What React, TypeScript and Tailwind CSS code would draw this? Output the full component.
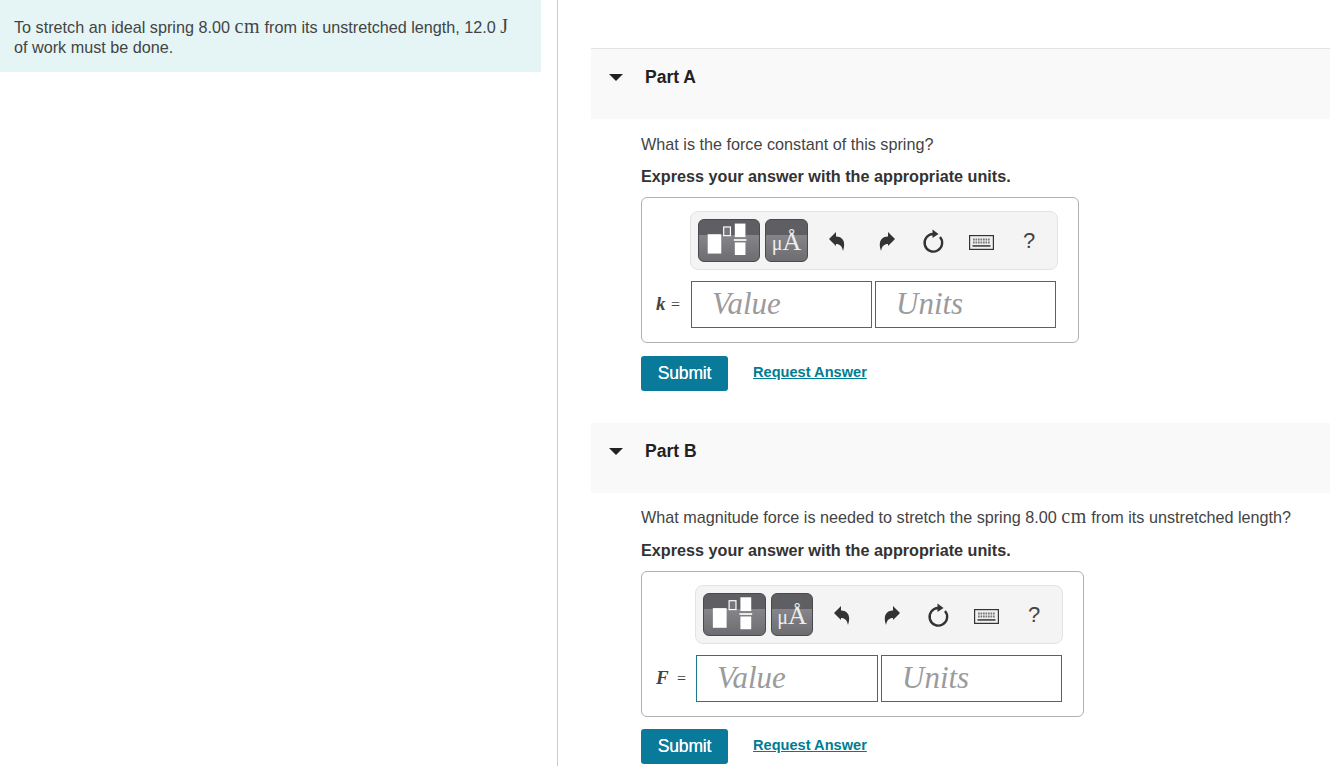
const sans = { fontFamily: '"Liberation Sans", Arial, sans-serif' };

function Cm() {
  return <span className="font-['Liberation_Serif',serif] text-[20px] leading-none tracking-[0.600px]">cm</span>;
}

function TemplateIcon() {
  return (
    <svg width="62" height="43" viewBox="0 0 62 43" className="block">
      <rect x="9" y="15" width="14" height="20" fill="#fff" />
      <rect x="25.500" y="7.500" width="7" height="9" fill="#77777b" stroke="#fff" strokeWidth="1.200" />
      <rect x="37" y="4" width="11" height="14" fill="#fff" />
      <rect x="36" y="20" width="13" height="2" fill="#fff" opacity="0.85" />
      <rect x="37" y="23.500" width="11" height="13" fill="#fff" />
    </svg>
  );
}

function Undo({ flip }: { flip?: boolean }) {
  return (
    <svg width="20" height="22" viewBox="0 0 20 22" className={flip ? "-scale-x-100" : ""}>
      <path d="M1 9 8 2V6.500C14 6.500 18.500 11 15 21C14 16 12 14 8 14V16Z" fill="#333" />
    </svg>
  );
}

function Reset() {
  return (
    <svg width="24" height="26" viewBox="0 0 24 26">
      <path d="M18 9A8.800 8.800 0 1 1 11 6" fill="none" stroke="#333" strokeWidth="2.400" />
      <path d="M10.500 1.500 16.500 6 10.500 10Z" fill="#333" />
    </svg>
  );
}

function Keyboard() {
  const keys: number[] = [4, 6.500, 9, 11.500, 14, 16.500, 19];
  return (
    <svg width="25" height="15" viewBox="0 0 25 15">
      <rect x="0.600" y="0.600" width="23.800" height="13.800" fill="#f0f0f0" stroke="#333" strokeWidth="1.200" />
      {[3.500, 6.500].map((y) =>
        keys.map((x) => <rect key={`${x}-${y}`} x={x} y={y} width="1.700" height="2" fill="#777" />)
      )}
      <rect x="3.500" y="10" width="18" height="1.800" fill="#555" />
    </svg>
  );
}

function Toolbar({ firstWidth, secondWidth }: { firstWidth: number; secondWidth: number }) {
  const tool = "flex h-[43px] items-center justify-center rounded-[6px] border border-[#4a4a4d] bg-[linear-gradient(#5f5f63_0%,#5f5f63_36%,#85858a_36%,#6c6c71_100%)]";
  return (
    <div className="flex h-[59px] w-[368px] items-center rounded-[8px] border border-[#e3e3e3] bg-[#f4f4f4] pl-[7px]">
      <div className={tool} style={{ width: firstWidth }}>
        <TemplateIcon />
      </div>
      <div className={`${tool} ml-[5px]`} style={{ width: secondWidth }}>
        <span className="mt-[3px] font-['Liberation_Serif',serif] leading-none text-[#eeeeee]">
          <span className="text-[20px]">μ</span>
          <span className="text-[26px]">Å</span>
        </span>
      </div>
      <div className="ml-[6px] flex w-[48px] justify-center"><Undo /></div>
      <div className="flex w-[47px] justify-center"><Undo flip /></div>
      <div className="flex w-[50px] justify-center"><Reset /></div>
      <div className="flex w-[44px] justify-center pt-[3px]"><Keyboard /></div>
      <div className="flex w-[52px] justify-center text-[22px] text-[#444]">?</div>
    </div>
  );
}

function AnswerBox({ symbol, symbolWidth, width, inset, firstWidth, secondWidth, valueWidth }: { symbol: string; symbolWidth: number; width: number; inset: number; firstWidth: number; secondWidth: number; valueWidth: number }) {
  const field = "flex h-[47px] items-center border border-[#1b7a8c] bg-white pl-[20px] font-['Liberation_Serif',serif] text-[31px] italic text-[#9b9b9b]";
  return (
    <div className="h-[146px] rounded-[6px] border border-[#b0b0b0] bg-white pt-[13px]" style={{ width }}>
      <div className="flex" style={{ paddingLeft: inset - 2 }}>
        <Toolbar firstWidth={firstWidth} secondWidth={secondWidth} />
      </div>
      <div className="mt-[11px] flex items-center">
        <div className="flex shrink-0 items-center pl-[14px] text-[#444]" style={{ width: inset - 1 }}>
          <span className="font-['Liberation_Serif',serif] text-[19px] font-bold italic" style={{ width: symbolWidth }}>{symbol}</span>
          <span className="font-['Liberation_Serif',serif] text-[16px]">=</span>
        </div>
        <div className={field} style={{ width: valueWidth }}>Value</div>
        <div className={`${field} ml-[3px] w-[181px]`}>Units</div>
      </div>
    </div>
  );
}

function Actions({ top }: { top: number }) {
  return (
    <div className="flex items-center" style={{ marginTop: top }}>
      <button className="h-[35px] w-[87px] rounded-[3px] bg-[#0a7a9b] text-[17.500px] tracking-[-0.200px] text-white [text-shadow:0_0_0.600px_#fff]">Submit</button>
      <a className="mb-[2px] ml-[25px] text-[14.600px] font-bold text-[#007c92] underline">Request Answer</a>
    </div>
  );
}

function PartHeader({ title, tall }: { title: string; tall?: boolean }) {
  return (
    <div className={`flex items-start bg-[#f9f9f9] ${tall ? "h-[71px] border-t border-[#e3e3e3]" : "h-[70px]"}`}>
      <div className="ml-[18px] mt-[25px] h-0 w-0 border-x-[7px] border-t-[7px] border-x-transparent border-t-[#222]" />
      <div className="ml-[22px] mt-[17px] text-[17.500px] font-bold leading-[22px] text-[#222]">{title}</div>
    </div>
  );
}

export default function App() {
  return (
    <div className="flex h-[766px] w-[1330px] overflow-hidden bg-white text-[16.200px] text-[#444]" style={sans}>
      <div className="h-full w-[558px] shrink-0 border-r border-[#b5d3e3]">
        <div className="h-[72px] w-[541px] bg-[#e5f5f6] px-[14px] pt-[16px] leading-[20px]">
          To stretch an ideal spring 8.00 <Cm /> from its unstretched length, 12.0{" "}
          <span className="font-['Liberation_Serif',serif] text-[20px] leading-none">J</span>
          <br />
          of work must be done.
        </div>
      </div>

      <div className="flex-1 pl-[33px] pt-[48px]">
        <PartHeader title="Part A" tall />
        <div className="pl-[50px]">
          <p className="mt-[15px] leading-[20px]">What is the force constant of this spring?</p>
          <p className="mt-[12px] font-bold leading-[20px] text-[#333]">Express your answer with the appropriate units.</p>
          <div className="mt-[11px]">
            <AnswerBox symbol="k" symbolWidth={15} width={438} inset={50} firstWidth={62} secondWidth={43} valueWidth={181} />
          </div>
          <Actions top={13} />
        </div>

        <div className="mt-[32px]">
          <PartHeader title="Part B" />
        </div>
        <div className="pl-[50px]">
          <p className="mt-[13px] leading-[20px]">
            What magnitude force is needed to stretch the spring 8.00 <Cm /> from its unstretched length?
          </p>
          <p className="mt-[13px] font-bold leading-[20px] text-[#333]">Express your answer with the appropriate units.</p>
          <div className="mt-[11px]">
            <AnswerBox symbol="F" symbolWidth={21} width={443} inset={55} firstWidth={63} secondWidth={42} valueWidth={182} />
          </div>
          <Actions top={12} />
        </div>
      </div>
    </div>
  );
}
